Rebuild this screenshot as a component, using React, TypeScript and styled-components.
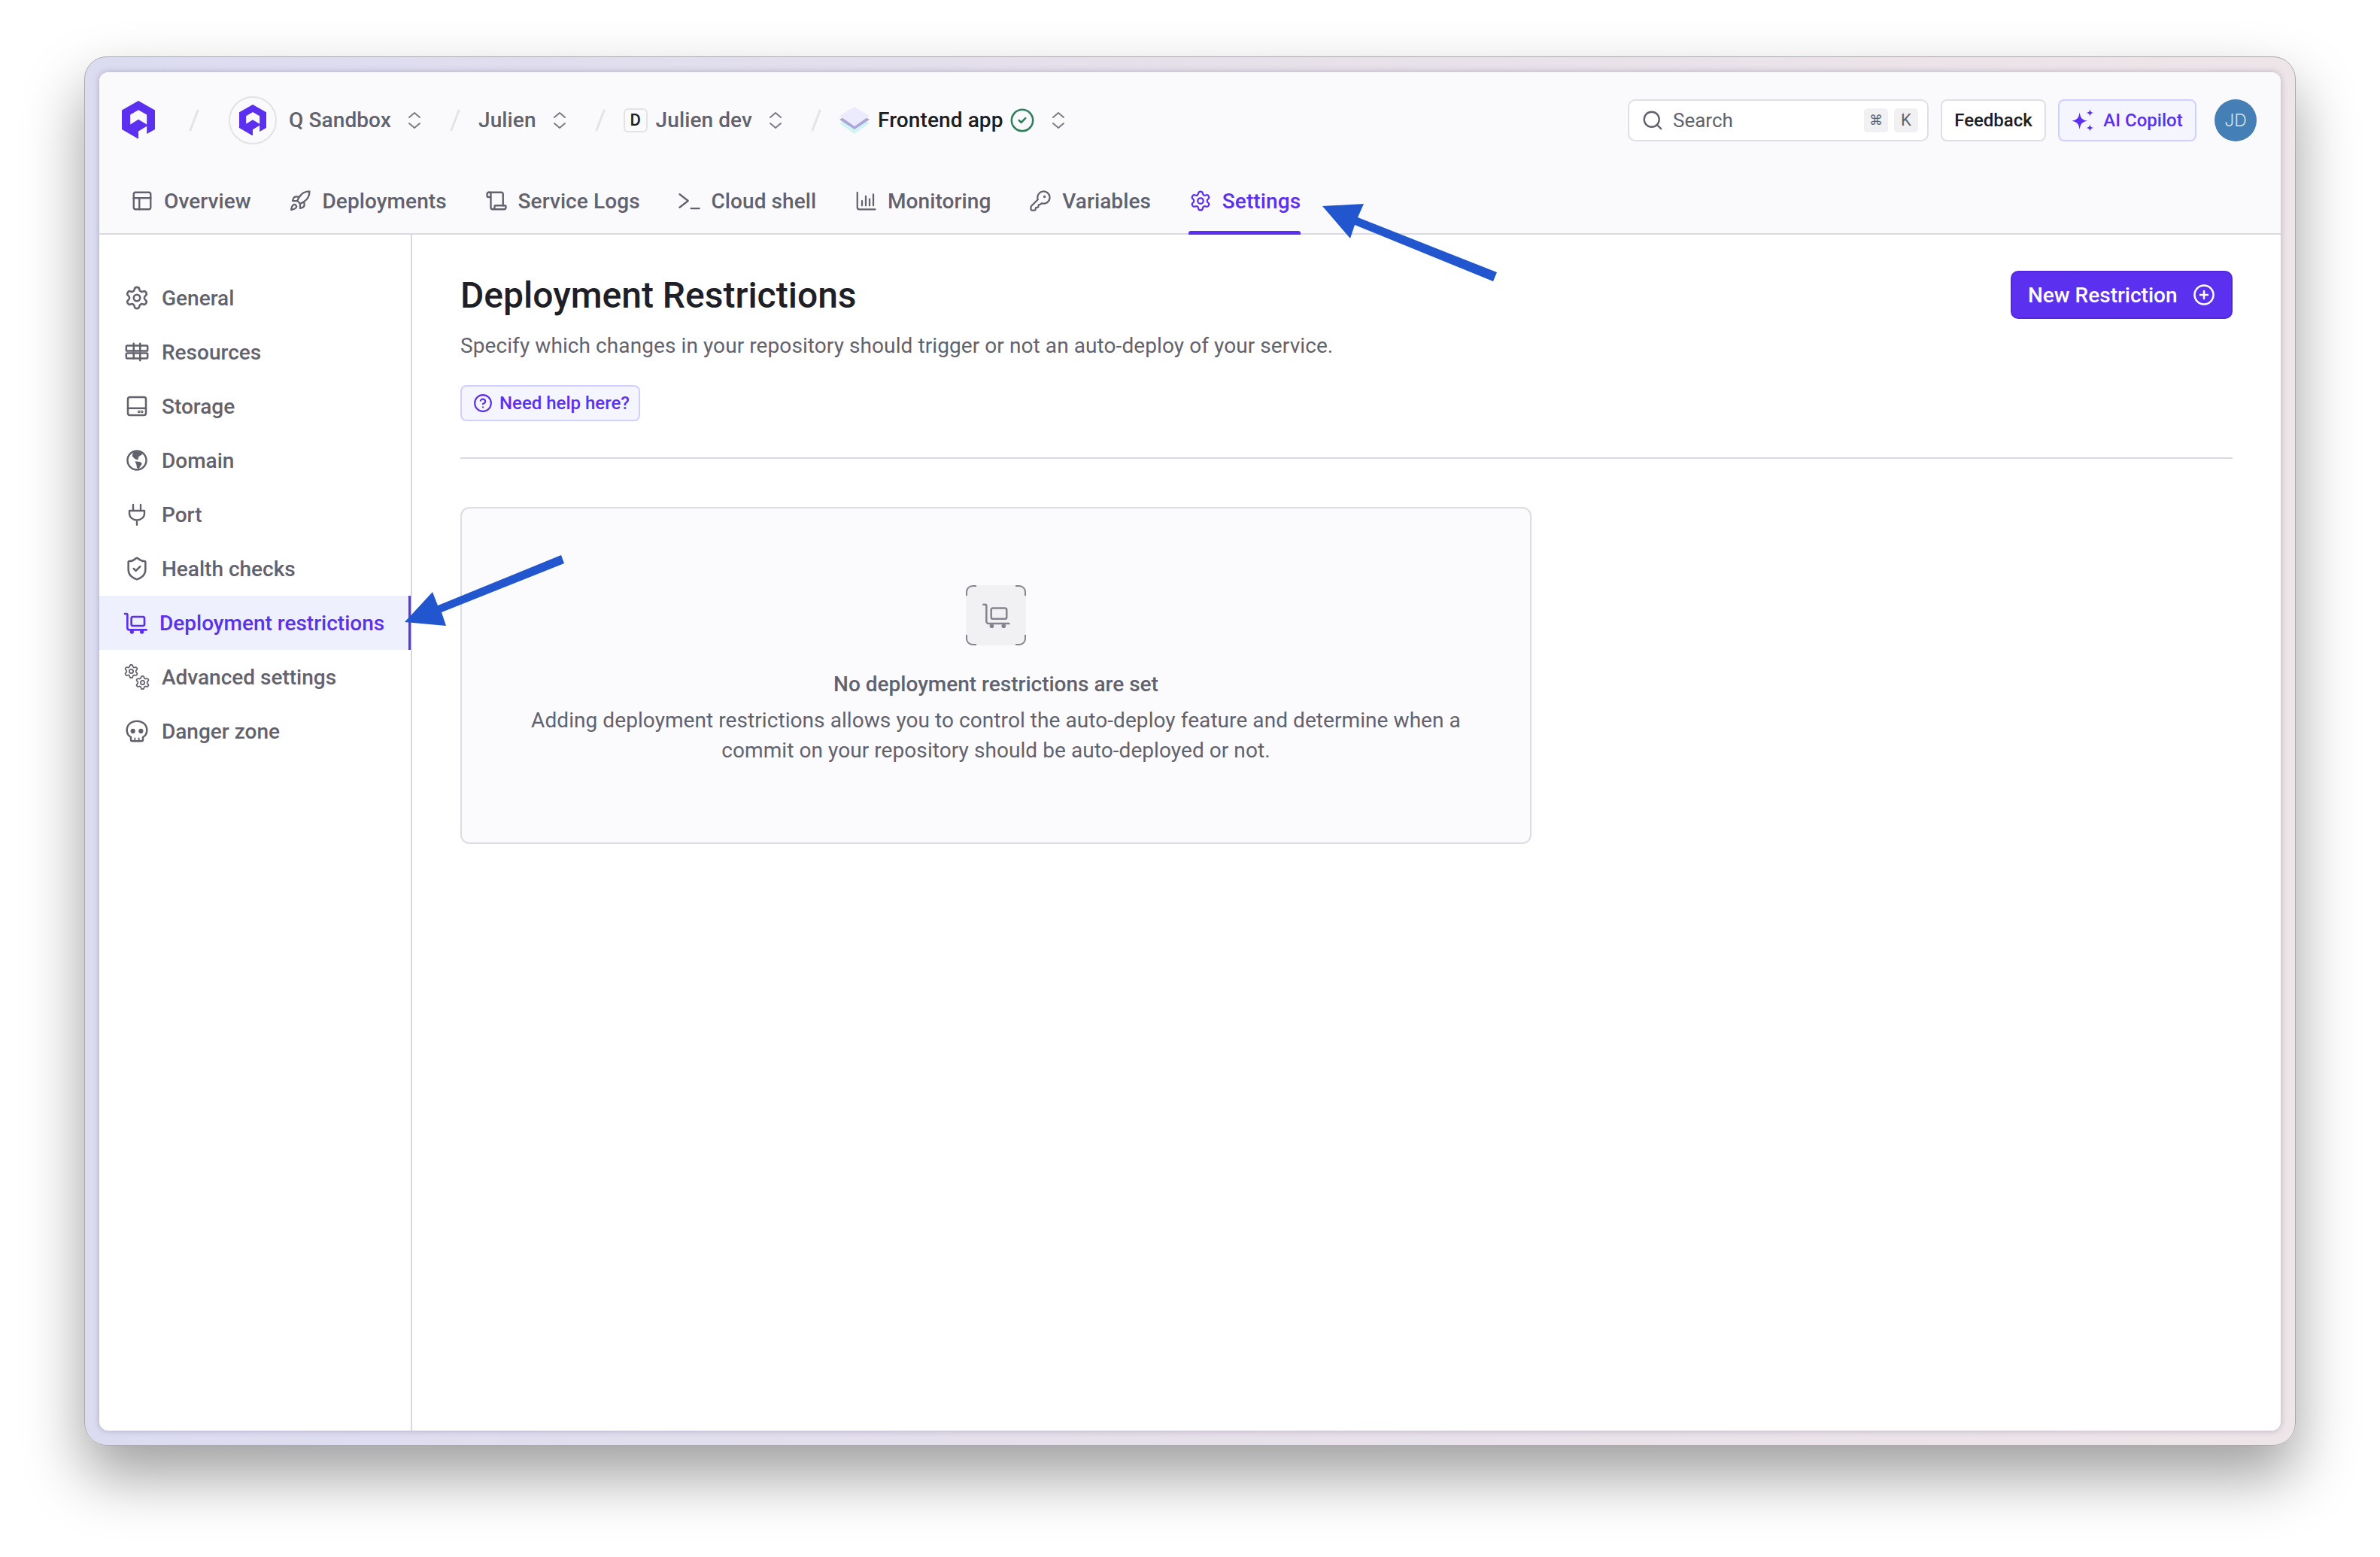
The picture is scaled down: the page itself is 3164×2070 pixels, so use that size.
import React from "react";
import styled, { createGlobalStyle } from "styled-components";
import {
  CircleCheck,
  CirclePlus,
  CircleHelp,
  KeyRound,
  PanelsTopLeft,
  Rocket,
  Scroll,
  Search,
  Settings,
  ShieldCheck,
} from "lucide-react";

const GlobalStyle = createGlobalStyle`
  html, body {
    margin: 0;
    padding: 0;
    background: #fff;
  }
  * {
    box-sizing: border-box;
  }
  body {
    font-family: Roboto, "Liberation Sans", sans-serif;
  }
`;

const PURPLE = "#5b30ee";

const QLogo: React.FC<{ size: number }> = ({ size }) => (
  <svg width={size} height={(size * 150) / 130} viewBox="0 0 130 150">
    <path
      fill={PURPLE}
      fillRule="evenodd"
      d="M65 0L130 37V112L98 130V100L65 120V150L0 112V37ZM33 55L65 36L98 55V93L65 73L33 93Z"
    />
  </svg>
);

const Slash: React.FC<{ $first?: boolean }> = ({ $first }) => (
  <SlashSvg $first={$first} width="14" height="30" viewBox="0 0 14 30">
    <path d="M12 2L2 28" stroke="#e4e4e7" strokeWidth="3" strokeLinecap="round" />
  </SlashSvg>
);

const UpDown: React.FC = () => (
  <UpDownSvg width="18" height="24" viewBox="0 0 18 24" fill="none">
    <path
      d="M2 8L9 2L16 8M2 16L9 22L16 16"
      stroke="#7c7c88"
      strokeWidth="2"
      strokeLinecap="round"
      strokeLinejoin="round"
    />
  </UpDownSvg>
);

const Layers: React.FC = () => (
  <svg width="40" height="36" viewBox="0 0 40 36">
    <path d="M20 10L40 22L20 36L0 22Z" fill="#d3f4f4" />
    <path d="M20 5L40 17L20 30L0 17Z" fill="#a9a6d9" />
    <path d="M20 0L40 12L20 26L0 12Z" fill="#eceafd" />
  </svg>
);

const Stroke: React.FC<{ children: React.ReactNode; size?: number; weight?: number }> = ({
  children,
  size = 30,
  weight = 2,
}) => (
  <svg
    width={size}
    height={size}
    viewBox="0 0 24 24"
    fill="none"
    stroke="currentColor"
    strokeWidth={weight}
    strokeLinecap="round"
    strokeLinejoin="round"
  >
    {children}
  </svg>
);

const ShellIcon: React.FC = () => (
  <Stroke size={32} weight={1.8}>
    <path d="M2 5l9 7-9 7M14 20h9" />
  </Stroke>
);

const Bars: React.FC = () => (
  <Stroke size={32} weight={1.8}>
    <path d="M3 3v16a2 2 0 0 0 2 2h17" />
    <path d="M8 17v-5M12 17V7M16 17v-7M20 17V5" />
  </Stroke>
);

const ResourcesIcon: React.FC = () => (
  <Stroke size={34} weight={1.8}>
    <rect x="2" y="6" width="20" height="5" rx="1" />
    <rect x="2" y="13" width="20" height="5" rx="1" />
    <path d="M9 4v7M15 4v7M15 13v7M9 13v5" />
  </Stroke>
);

const StorageIcon: React.FC = () => (
  <Stroke size={32} weight={1.9}>
    <rect x="3" y="3" width="18" height="18" rx="2" />
    <path d="M3 14h18" />
    <circle cx="14" cy="17.5" r="0.5" />
    <circle cx="17" cy="17.5" r="0.5" />
  </Stroke>
);

const GlobeIcon: React.FC = () => (
  <Stroke size={30}>
    <circle cx="12" cy="12" r="10" />
    <path
      fill="currentColor"
      stroke="none"
      d="M8 2.5h8l2 3-4 2.5-1 3.500-3-1-3-3zM10 13l5.500.5 2 2-3.500 5.500-2-1-.5-3.500z"
    />
  </Stroke>
);

const PlugIcon: React.FC = () => (
  <Stroke size={30} weight={1.9}>
    <path d="M8 1.500V8M16 1.500V8M4 8h16v3a8 7 0 0 1-16 0zM12 18v5" />
  </Stroke>
);

const CartIcon: React.FC<{ size?: number; weight?: number }> = ({ size = 32, weight = 2 }) => (
  <Stroke size={size} weight={weight}>
    <path d="M1.500 3H3a1 1 0 0 1 1 1v13a2 2 0 0 0 2 2h17" />
    <rect x="8" y="6" width="13" height="9" rx="1.500" />
    <circle cx="8.500" cy="21" r="1" fill="currentColor" />
    <circle cx="18.500" cy="21" r="1" fill="currentColor" />
  </Stroke>
);

const GearsIcon: React.FC = () => (
  <svg width="34" height="34" viewBox="0 0 34 34" fill="none" stroke="currentColor">
    <Settings x="-1" y="-1" width="21" height="21" strokeWidth="2" />
    <Settings x="14" y="14" width="21" height="21" strokeWidth="2" />
  </svg>
);

const SkullIcon: React.FC = () => (
  <Stroke size={32} weight={1.9}>
    <path d="M12 2C6 2 2 6 2 11c0 3 1.500 5.500 4 7v2.500A1.500 1.500 0 0 0 7.500 22h9a1.500 1.500 0 0 0 1.500-1.500V18c2.500-1.500 4-4 4-7 0-5-4-9-10-9z" />
    <circle cx="8" cy="12" r="1.400" fill="currentColor" />
    <circle cx="16" cy="12" r="1.400" fill="currentColor" />
    <path d="M10 19v3M14 19v3" strokeWidth="1.400" />
  </Stroke>
);

const SparkIcon: React.FC = () => (
  <svg width="30" height="30" viewBox="0 0 24 24" fill="currentColor">
    <path d="M8.500 3.500C9.500 9.500 11 11.500 17 12.500 11 13.500 9.500 15.500 8.500 21.500 7.500 15.500 6 13.500 0 12.500 6 11.500 7.500 9.500 8.500 3.500Z" />
    <path d="M19.500 0C19.900 2.800 20.700 3.600 23.500 4 20.700 4.400 19.900 5.200 19.500 8 19.100 5.200 18.300 4.400 15.500 4 18.300 3.600 19.100 2.800 19.500 0Z" />
    <path d="M19.500 16C19.900 18.800 20.700 19.600 23.500 20 20.700 20.400 19.900 21.200 19.500 24 19.100 21.200 18.300 20.400 15.500 20 18.300 19.600 19.100 18.800 19.500 16Z" />
  </svg>
);

const EmptyGlyph: React.FC = () => (
  <svg width="80" height="80" viewBox="0 0 80 80" fill="none">
    <rect width="80" height="80" rx="8" fill="#f1f0f3" />
    <path
      d="M1 14V9a8 8 0 0 1 8-8h5M66 1h5a8 8 0 0 1 8 8v5M79 66v5a8 8 0 0 1-8 8h-5M14 79H9a8 8 0 0 1-8-8v-5"
      stroke="#85858f"
      strokeWidth="2"
    />
    <g transform="translate(21 21)" color="#85858f">
      <CartIcon size={38} weight={1.600} />
    </g>
  </svg>
);

const tabs = [
  { label: "Overview", icon: <PanelsTopLeft size={30} strokeWidth={1.9} /> },
  { label: "Deployments", icon: <Rocket size={34} strokeWidth={1.8} /> },
  { label: "Service Logs", icon: <Scroll size={32} strokeWidth={1.9} /> },
  { label: "Cloud shell", icon: <ShellIcon /> },
  { label: "Monitoring", icon: <Bars /> },
  { label: "Variables", icon: <KeyRound size={34} strokeWidth={1.8} /> },
  { label: "Settings", icon: <Settings size={34} strokeWidth={1.8} />, active: true },
];

const sideItems = [
  { label: "General", icon: <Settings size={34} strokeWidth={1.8} /> },
  { label: "Resources", icon: <ResourcesIcon /> },
  { label: "Storage", icon: <StorageIcon /> },
  { label: "Domain", icon: <GlobeIcon /> },
  { label: "Port", icon: <PlugIcon /> },
  { label: "Health checks", icon: <ShieldCheck size={34} strokeWidth={1.8} /> },
  { label: "Deployment restrictions", icon: <CartIcon />, active: true },
  { label: "Advanced settings", icon: <GearsIcon /> },
  { label: "Danger zone", icon: <SkullIcon /> },
];

export default function App() {
  return (
    <>
      <GlobalStyle />
      <Page>
        <Frame>
          <Window>
            <Header>
              <TopRow>
                <QLogo size={44} />
                <Slash $first />
                <OrgBadge>
                  <QLogo size={36} />
                </OrgBadge>
                <Crumb>Q Sandbox</Crumb>
                <UpDown />
                <Slash />
                <Crumb>Julien</Crumb>
                <UpDown />
                <Slash />
                <EnvBadge>D</EnvBadge>
                <Crumb>Julien dev</Crumb>
                <UpDown />
                <Slash />
                <Layers />
                <Crumb $strong>Frontend app</Crumb>
                <StatusSlot>
                  <CircleCheck size={34} strokeWidth={1.8} />
                </StatusSlot>
                <UpDown />
                <Spacer />
                <SearchBox>
                  <Search size={30} strokeWidth={1.9} />
                  <SearchText>Search</SearchText>
                  <Key $symbol>⌘</Key>
                  <Key>K</Key>
                </SearchBox>
                <FeedbackButton>Feedback</FeedbackButton>
                <CopilotButton>
                  <SparkIcon />
                  AI Copilot
                </CopilotButton>
                <Avatar>JD</Avatar>
              </TopRow>
              <TabRow>
                {tabs.map((tab) => (
                  <Tab key={tab.label} $active={tab.active}>
                    <TabIcon>{tab.icon}</TabIcon>
                    {tab.label}
                  </Tab>
                ))}
              </TabRow>
            </Header>
            <Body>
              <Sidebar>
                {sideItems.map((item) => (
                  <SideItem key={item.label} $active={item.active}>
                    <SideIcon $active={item.active}>{item.icon}</SideIcon>
                    {item.label}
                  </SideItem>
                ))}
              </Sidebar>
              <Main>
                <TitleRow>
                  <Title>Deployment Restrictions</Title>
                  <PrimaryButton>
                    New Restriction
                    <CirclePlus size={30} strokeWidth={2} />
                  </PrimaryButton>
                </TitleRow>
                <Subtitle>
                  Specify which changes in your repository should trigger or not an auto-deploy of your service.
                </Subtitle>
                <HelpLink>
                  <CircleHelp size={26} strokeWidth={2} />
                  Need help here?
                </HelpLink>
                <Divider />
                <EmptyCard>
                  <EmptyGlyph />
                  <EmptyTitle>No deployment restrictions are set</EmptyTitle>
                  <EmptyText>
                    Adding deployment restrictions allows you to control the auto-deploy feature and determine when a
                    commit on your repository should be auto-deployed or not.
                  </EmptyText>
                </EmptyCard>
              </Main>
            </Body>
          </Window>
        </Frame>
        <Arrows viewBox="0 0 3164 2070">
          <polygon points="1758,274 1813,271 1805,289 1990,362 1985,374 1801,299 1795,317" />
          <polygon points="538,827 575,787 582,805 746,738 750,749 587,814 593,832" />
        </Arrows>
      </Page>
    </>
  );
}

const Page = styled.div`
  position: relative;
  width: 3164px;
  height: 2070px;
  padding: 75px 112px 0;
  background: #fff;
  overflow: hidden;
`;

const Frame = styled.div`
  height: 1847px;
  padding: 20px 19px 19px;
  border-radius: 30px;
  background: linear-gradient(90deg, #dcdcf1 0%, #e6e0ea 50%, #eee5e8 100%);
  border: 1px solid #a9a9ad;
  box-shadow: 0 40px 80px rgba(0, 0, 0, 0.38);
`;

const Window = styled.div`
  display: flex;
  flex-direction: column;
  height: 100%;
  border-radius: 12px;
  background: #fff;
  overflow: hidden;
  box-shadow: 0 0 8px rgba(60, 50, 90, 0.3);
`;

const Header = styled.header`
  background: #fafafc;
  color: #62626e;
`;

const TopRow = styled.div`
  display: flex;
  align-items: center;
  height: 127px;
  padding: 0 32px 0 30px;
`;

const SlashSvg = styled.svg<{ $first?: boolean }>`
  flex: none;
  margin: 0 24px 0 ${(p) => (p.$first ? "45px" : "38px")};
`;

const UpDownSvg = styled.svg`
  flex: none;
  margin-left: 22px;
`;

const OrgBadge = styled.div`
  display: flex;
  align-items: center;
  justify-content: center;
  width: 64px;
  height: 64px;
  margin: 0 16px 0 15px;
  border: 2px solid #e2e2e7;
  border-radius: 50%;
`;

const EnvBadge = styled.div`
  display: flex;
  align-items: center;
  justify-content: center;
  width: 32px;
  height: 32px;
  margin: 0 11px 0 0;
  border: 2px solid #e2e2e7;
  border-radius: 6px;
  color: #1d1d24;
  font-size: 22px;
  font-weight: 500;
`;

const Crumb = styled.span<{ $strong?: boolean }>`
  font-size: 28px;
  font-weight: 500;
  letter-spacing: 0.1px;
  color: ${(p) => (p.$strong ? "#1d1d24" : "#62626e")};
  margin-left: ${(p) => (p.$strong ? "11px" : "0")};
`;

const StatusSlot = styled.span`
  display: flex;
  margin: 0 0 0 8px;
  color: #2f7f5b;
`;

const Spacer = styled.div`
  flex: 1;
`;

const SearchBox = styled.div`
  display: flex;
  align-items: center;
  width: 400px;
  height: 56px;
  margin-right: 16px;
  padding: 0 12px 0 16px;
  border: 2px solid #dfdfe5;
  border-radius: 10px;
  background: #fff;
  color: #62626e;
`;

const SearchText = styled.span`
  flex: 1;
  margin-left: 12px;
  font-size: 26px;
`;

const Key = styled.span<{ $symbol?: boolean }>`
  display: flex;
  align-items: center;
  justify-content: center;
  width: 32px;
  height: 32px;
  margin-left: 8px;
  border-radius: 5px;
  background: #f1f0f3;
  font-family: ${(p) => (p.$symbol ? '"DejaVu Sans", sans-serif' : "Roboto, sans-serif")};
  font-size: ${(p) => (p.$symbol ? "18px" : "22px")};
`;

const FeedbackButton = styled.button`
  height: 56px;
  width: 140px;
  margin-right: 16px;
  padding: 0;
  border: 2px solid #dfdfe5;
  border-radius: 8px;
  background: #fff;
  color: #1d1d24;
  font-family: inherit;
  font-size: 24px;
  font-weight: 500;
`;

const CopilotButton = styled.button`
  display: flex;
  align-items: center;
  justify-content: center;
  gap: 12px;
  width: 184px;
  height: 56px;
  margin-right: 24px;
  padding: 0;
  border: 2px solid #cfd0ff;
  border-radius: 8px;
  background: #f5f5ff;
  color: ${PURPLE};
  font-family: inherit;
  font-size: 24px;
  font-weight: 500;
`;

const Avatar = styled.div`
  display: flex;
  align-items: center;
  justify-content: center;
  width: 56px;
  height: 56px;
  border-radius: 50%;
  background: #447fb5;
  color: #d5e2f0;
  font-family: Inter, sans-serif;
  font-size: 23px;
  font-weight: 300;
`;

const TabRow = styled.nav`
  display: flex;
  gap: 50.7px;
  height: 89px;
  padding-left: 42px;
  border-bottom: 2px solid #dadae0;
`;

const Tab = styled.a<{ $active?: boolean }>`
  position: relative;
  display: flex;
  align-items: center;
  height: 87px;
  padding-top: 1px;
  font-size: 28px;
  font-weight: 500;
  letter-spacing: 0.1px;
  color: ${(p) => (p.$active ? PURPLE : "#62626e")};

  &::after {
    content: "";
    display: ${(p) => (p.$active ? "block" : "none")};
    position: absolute;
    left: -1px;
    right: 0;
    bottom: -2px;
    height: 5px;
    border-radius: 3px 3px 0 0;
    background: ${PURPLE};
  }
`;

const TabIcon = styled.span`
  display: flex;
  align-items: center;
  justify-content: center;
  flex: none;
  width: 30px;
  margin-right: 14px;
`;

const Body = styled.div`
  display: flex;
  flex: 1;
  min-height: 0;
`;

const Sidebar = styled.aside`
  flex: none;
  width: 416px;
  padding-top: 48px;
  border-right: 2px solid #d8d8de;
`;

const SideItem = styled.a<{ $active?: boolean }>`
  display: flex;
  align-items: center;
  height: 72px;
  padding-left: ${(p) => (p.$active ? "31px" : "33px")};
  font-size: 28px;
  font-weight: 500;
  color: ${(p) => (p.$active ? PURPLE : "#62626e")};
  background: ${(p) => (p.$active ? "#eff0fd" : "transparent")};
  border-right: 3px solid ${(p) => (p.$active ? PURPLE : "transparent")};
`;

const SideIcon = styled.span<{ $active?: boolean }>`
  display: flex;
  align-items: center;
  justify-content: center;
  flex: none;
  width: 34px;
  margin-right: ${(p) => (p.$active ? "15px" : "16px")};
`;

const Main = styled.main`
  flex: 1;
  min-width: 0;
  padding: 48px 64px;
  color: #62626e;
`;

const TitleRow = styled.div`
  display: flex;
  align-items: center;
  justify-content: space-between;
  height: 64px;
`;

const Title = styled.h1`
  margin: 0;
  font-size: 48px;
  font-weight: 500;
  color: #1f1f27;
`;

const PrimaryButton = styled.button`
  display: flex;
  align-items: center;
  gap: 20px;
  height: 64px;
  width: 295px;
  padding: 0 0 0 21px;
  border: 2px solid #5326e0;
  border-radius: 10px;
  background: ${PURPLE};
  color: #fff;
  font-family: inherit;
  font-size: 28px;
  font-weight: 500;
`;

const Subtitle = styled.p`
  margin: 16px 0 0;
  font-size: 28px;
  line-height: 40px;
  letter-spacing: 0.085px;
`;

const HelpLink = styled.a`
  display: flex;
  align-items: center;
  gap: 9px;
  width: 239px;
  height: 48px;
  margin-top: 32px;
  padding-left: 15px;
  border: 2px solid #cfd0ff;
  border-radius: 8px;
  background: #f5f5ff;
  color: ${PURPLE};
  font-size: 24px;
  font-weight: 500;
`;

const Divider = styled.hr`
  height: 2px;
  margin: 48px 0 64px;
  border: 0;
  background: #d8d8de;
`;

const EmptyCard = styled.section`
  display: flex;
  flex-direction: column;
  align-items: center;
  width: 1424px;
  height: 448px;
  padding-top: 102px;
  border: 2px solid #dcdce2;
  border-radius: 12px;
  background: #fbfbfd;
  text-align: center;
`;

const EmptyTitle = styled.h2`
  margin: 32px 0 8px;
  font-size: 28px;
  line-height: 40px;
  font-weight: 500;
  color: #62626e;
`;

const EmptyText = styled.p`
  width: 1300px;
  margin: 0;
  font-size: 28px;
  line-height: 40px;
  letter-spacing: 0.07px;
`;

const Arrows = styled.svg`
  position: absolute;
  inset: 0;
  width: 3164px;
  height: 2070px;
  fill: #2156ce;
  pointer-events: none;
`;
